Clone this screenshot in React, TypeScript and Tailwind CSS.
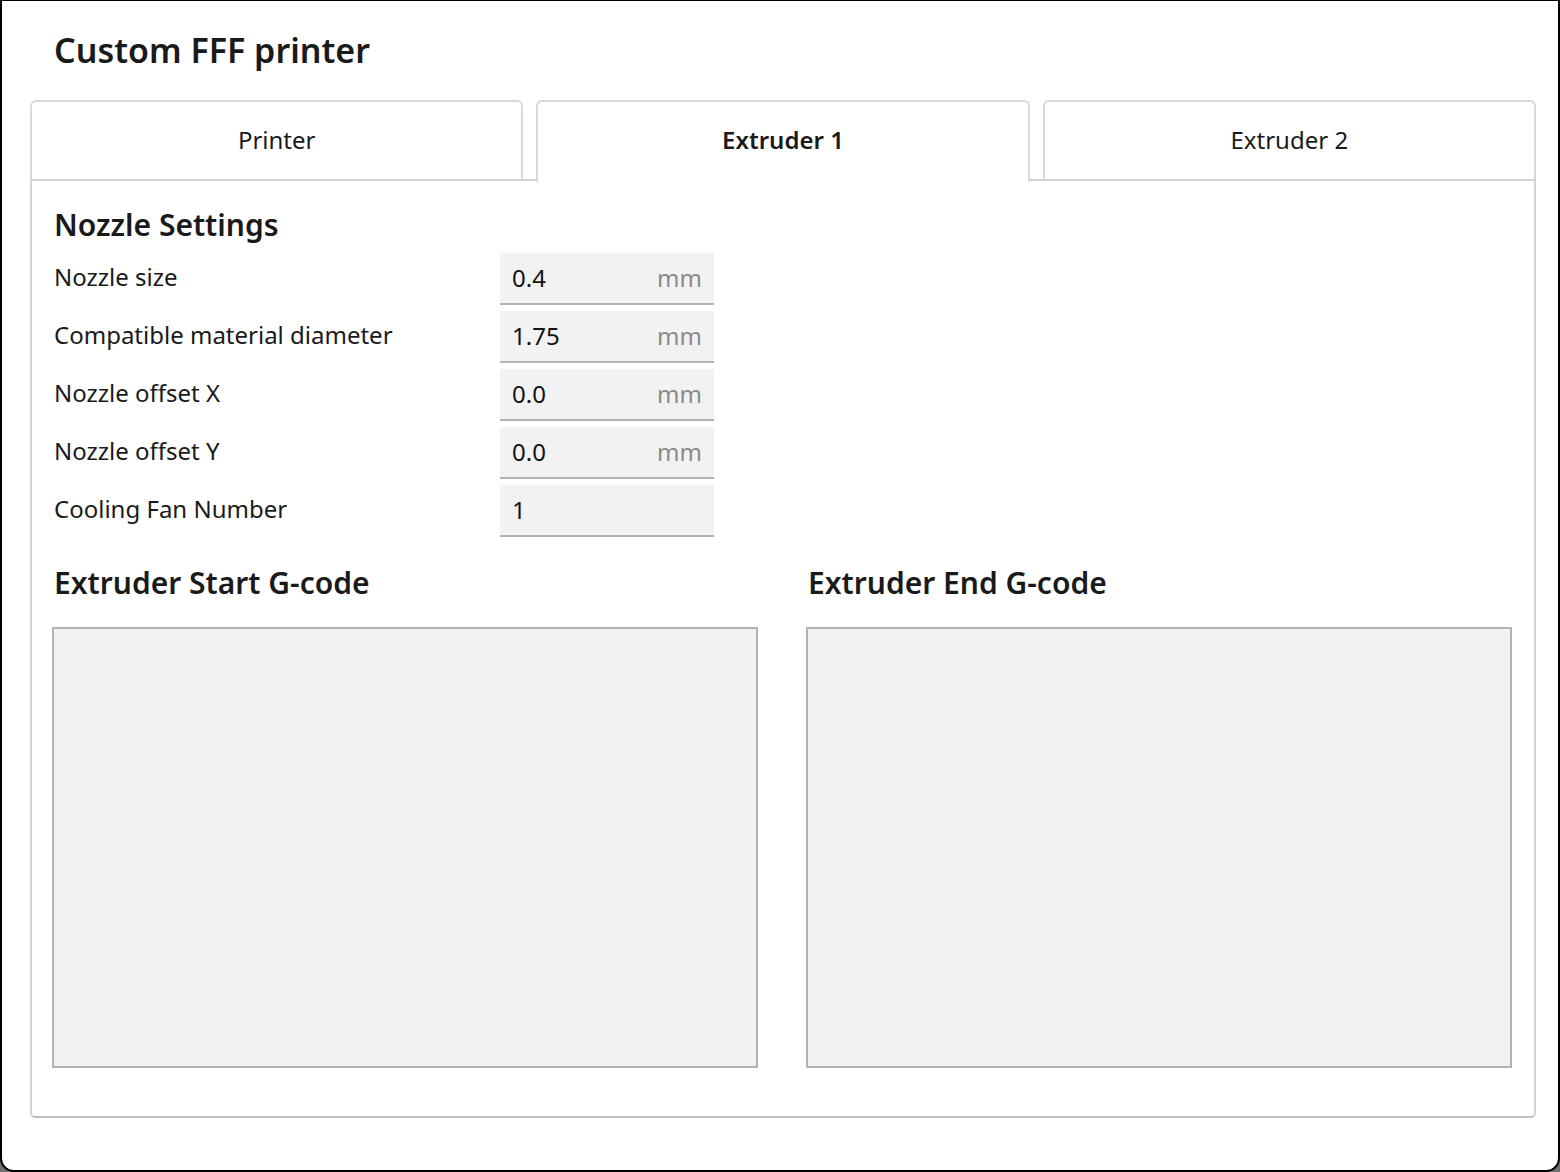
import React from "react";

const rows = [
  { label: "Nozzle size", value: "0.4", unit: "mm" },
  { label: "Compatible material diameter", value: "1.75", unit: "mm" },
  { label: "Nozzle offset X", value: "0.0", unit: "mm" },
  { label: "Nozzle offset Y", value: "0.0", unit: "mm" },
  { label: "Cooling Fan Number", value: "1", unit: "" },
];

export default function App() {
  return (
    <div className="w-[1560px] h-[1172px] bg-[#6e6e6e]" style={{ fontFamily: '"Noto Sans", "Open Sans", sans-serif' }}>
      <div className="w-full h-full bg-white border-black border-t border-l-2 border-r-2 border-b-2 rounded-b-[14px] flex flex-col text-[#1a1a1a]">
        <div className="h-[99px] pl-[52px] pt-[25px]">
          <h1 className="text-[34px] leading-[48px] font-semibold">Custom FFF printer</h1>
        </div>
        <div className="pl-[28px] pr-[22px] flex flex-col">
          <div className="flex gap-[13px] relative z-10">
            <div className="flex-1 h-[80px] border-2 border-b-0 border-[#d9d9d9] rounded-t-[6px] flex items-center justify-center text-[24px] pb-[3px]">
              Printer
            </div>
            <div className="flex-1 border-2 border-b-0 border-[#d9d9d9] rounded-t-[6px] flex items-center justify-center text-[24px] font-semibold bg-white -mb-[2px] h-[82px] pb-[5px]">
              Extruder 1
            </div>
            <div className="flex-1 h-[80px] border-2 border-b-0 border-[#d9d9d9] rounded-t-[6px] flex items-center justify-center text-[24px] pb-[3px]">
              Extruder 2
            </div>
          </div>
          <div className="h-[939px] border-2 border-[#d2d2d2] border-b-[#bfbfbf] rounded-b-[5px] -mt-[1px] pl-[22px] pr-[22px] pt-[23px]">
            <h2 className="text-[30px] leading-[42px] font-semibold">Nozzle Settings</h2>
            <div className="flex flex-col gap-[6px] mt-[7px]">
              {rows.map((r) => (
                <div key={r.label} className="flex items-center h-[52px]">
                  <div className="w-[446px] text-[24px] pb-[4px]">{r.label}</div>
                  <div className="w-[214px] h-[52px] bg-[#f2f2f2] border-b-2 border-[#b3b3b3] flex items-center justify-between pl-[12px] pr-[12px]">
                    <span className="text-[24px] text-[#111]">{r.value}</span>
                    <span className="text-[24px] text-[#8a8a8a]">{r.unit}</span>
                  </div>
                </div>
              ))}
            </div>
            <div className="flex gap-[48px] mt-[25px] -ml-[2px]">
              {["Extruder Start G-code", "Extruder End G-code"].map((t) => (
                <div key={t} className="flex-1 flex flex-col">
                  <h2 className="text-[30px] leading-[42px] font-semibold pl-[2px]">{t}</h2>
                  <div className="mt-[23px] h-[441px] bg-[#f2f2f2] border-2 border-[#b3b3b3]"></div>
                </div>
              ))}
            </div>
          </div>
        </div>
      </div>
    </div>
  );
}
